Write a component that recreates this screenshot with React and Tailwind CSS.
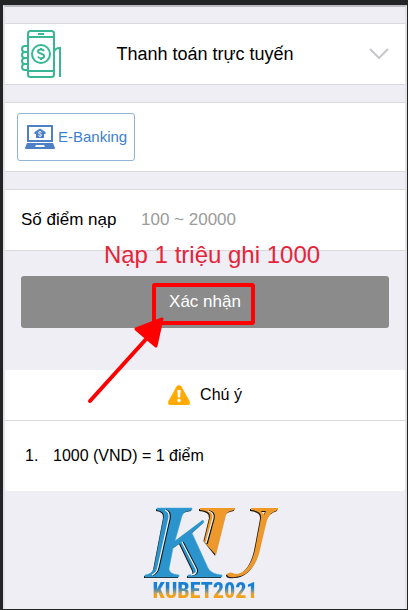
import React from "react";

function PhoneIcon() {
  return (
    <svg className="h-12 w-10 shrink-0" viewBox="0 0 40 48" fill="none" stroke="#38b795" strokeWidth="2" aria-hidden="true">
      <rect x="7" y="1" width="26" height="46" rx="2.5" />
      <path d="M7 7h26M7 41h26" />
      <path d="M17 4h6" />
      <circle cx="20" cy="24" r="9" />
      <path d="M23 21c-1-2-6-2-6 .5s6 1.5 6 4.500s-5 3-6 0.500M20 18v2M20 28v2" />
      <path d="M7 16H4q-3 0-3 3t3 3h3M4 22q-3 0-3 3t3 3h3M4 28q-3 0-3 3t3 3h3M4 34q-3 0-3 3t3 3h3" />
      <path d="M33 22q1-4 6-4v29" />
    </svg>
  );
}

function LaptopIcon() {
  return (
    <svg className="h-6 w-[30px] shrink-0" viewBox="0 0 30 24" aria-hidden="true">
      <path fill="#4e80c6" fillRule="evenodd" d="M3 0h24q1 0 1 1v16H2V1q0-1 1-1zM4 2v13h22V2z" />
      <path fill="#4e80c6" d="M15 3.500 20.500 7v2H19v4h-8V9H9.500V7z" />
      <path fill="none" stroke="#fff" strokeWidth="1" d="M16.500 7.500c-.5-1-3-1-3 .3s3 1 3 2.300-2.500 1.400-3 .3M15 6v1M15 11v1" />
      <path fill="#4e80c6" d="M2 18h26l2 5q0 1-1 1H1q-1 0-1-1z" />
      <path fill="#fff" d="M11 20h8l1 2H10z" />
    </svg>
  );
}

function KuLogo() {
  return (
    <svg className="h-[72px] w-[136px]" viewBox="0 0 136 72" role="img" aria-label="KU">
      <defs>
        <g id="ku-blue">
          <path d="M13 1H48V3L43 4Q39 5 38 9L31 34L59 13L60 15L48 26L64 61Q67 67 78 68V70H44V68Q51 68 49 63L36 36L29 41L25 62Q25 67 35 68V70H1V68Q8 67 10 62L20 10Q21 4 13 3Z" />
        </g>
        <g id="ku-orange">
          <path d="M56 1H91V3Q83 4 82 8L72 48L60 35L66 10Q67 4 56 3Z" />
          <path fillRule="evenodd" d="M107 1H134V3Q126 5 123 13L115 47Q108 69 91 70Q83 71 83 67Q86 64 91 67Q105 67 111 43L117 11Q118 4 107 3ZM117 4L120 8L122 4Z" />
        </g>
        <linearGradient id="ku-amber" x1="0" y1="0" x2="1" y2="1">
          <stop offset="0" stopColor="#f39a24" />
          <stop offset="1" stopColor="#e79735" />
        </linearGradient>
      </defs>
      <use href="#ku-blue" x="-1" y="1" fill="#10171c" />
      <use href="#ku-blue" fill="#2c94cc" stroke="#38a8da" strokeWidth="0.500" />
      <use href="#ku-orange" x="-1" y="1" fill="#19150f" />
      <use href="#ku-orange" fill="url(#ku-amber)" />
      <g fill="none" strokeLinejoin="round">
        <path stroke="#10171c" strokeWidth="1.500" d="M22 3Q27 5 26 11L15 60Q14 66 9 68M39 35L53 62Q55 67 48 68M65 4Q71 5 70 11L63 37" />
        <path stroke="#f4f5f8" strokeWidth="1.200" d="M21 3Q26 5 25 11L14 60Q13 66 8 68M38 35L52 62Q54 67 47 68M64 4Q70 5 69 11L62 36" />
        <path stroke="#efeef4" strokeWidth="2" d="M58 34 70 49" />
      </g>
    </svg>
  );
}

export default function App() {
  return (
    <div className="mr-0.5 flex min-h-screen flex-col border-t-[5px] border-r border-b border-l-[3px] border-[#232426] bg-[#efeef4] font-['Liberation_Sans',Arial,sans-serif] text-base text-black">
      <div className="flex grow flex-col border-x-2 border-t-2 border-x-[#e2e2e4] border-t-[#bdbdc1]">
        <main>
          <button type="button" className="mt-4 flex h-[62px] w-full items-center border-y border-[#d9d9dc] bg-white px-4 text-left">
            <PhoneIcon />
            <span className="grow text-center text-lg">Thanh toán trực tuyến</span>
            <span className="flex w-10 justify-end">
              <svg className="h-3 w-5 shrink-0" viewBox="0 0 20 12" fill="none" stroke="#c7c7cc" strokeWidth="2" aria-hidden="true">
                <path d="m1 1 9 9 9-9" />
              </svg>
            </span>
          </button>

          <section className="mt-[17px] border-y border-[#d9d9dc] bg-white px-3 py-2.5">
            <button type="button" className="flex h-12 w-[118px] items-center gap-[3px] rounded-[3px] border border-[#91b4d5] pl-[7px] whitespace-nowrap text-[#3c7fce]">
              <LaptopIcon />
              <span className="text-[15px]">E-Banking</span>
            </button>
          </section>

          <section className="mt-[17px] flex h-[62px] items-center border-y border-[#d9d9dc] bg-white px-4">
            <label htmlFor="points" className="w-[120px] shrink-0 text-[17px]">Số điểm nạp</label>
            <input id="points" type="text" inputMode="numeric" placeholder="100 ~ 20000" className="min-w-0 grow text-[17px] outline-none placeholder:text-[#9b9b9b]" />
          </section>

          <div className="relative px-4 pt-[25px] pb-[42px]">
            <p className="absolute inset-x-0 -top-3 pl-3.5 text-center text-2xl leading-8 text-[#e5243b]">Nạp 1 triệu ghi 1000</p>
            <button type="button" className="relative block h-[52px] w-full rounded-[3px] bg-[#8b8b8b] text-[17px] text-white">
              Xác nhận
              <span className="absolute top-[7px] left-1/2 h-[42px] w-[103px] -translate-x-[53px] rounded-[3px] border-4 border-[#ff0000]" />
            </button>
            <svg className="pointer-events-none absolute top-[66px] left-1/2 h-[90px] w-[78px] -translate-x-[119px]" viewBox="0 0 78 90" aria-hidden="true">
              <path d="M4 84 62 20" stroke="#ff0000" strokeWidth="4" strokeLinecap="round" />
              <path d="m76 2-6 27-20-17z" fill="#ff0000" stroke="#ff0000" strokeWidth="3" strokeLinejoin="round" />
            </svg>
          </div>

          <section className="rounded-b-[3px] bg-white">
            <h2 className="flex h-[51px] items-center justify-center gap-2.5 border-b border-[#d9d9dc]">
              <svg className="h-5 w-[22px]" viewBox="0 0 22 20" aria-hidden="true">
                <path fill="#ffaa05" d="M8.500 1.500Q11-1.500 13.500 1.500L21.500 16Q23 20 19 20H3Q-1 20 .5 16z" />
                <path fill="#fff" d="M9.300 5h3.400l-.6 7.500H9.900z" />
                <circle cx="11" cy="15.500" r="1.700" fill="#fff" />
              </svg>
              Chú ý
            </h2>
            <ol className="px-5 py-[23px]">
              <li className="flex leading-6">
                <span className="w-7">1.</span>
                <span>1000 (VND) = 1 điểm</span>
              </li>
            </ol>
          </section>
        </main>

        <footer className="flex flex-col items-center pt-4">
          <div className="pl-3.5">
            <KuLogo />
          </div>
          <p className="bg-linear-to-b from-[#177fd5] from-35% via-[#6f9590] via-50% to-[#f0a21c] to-65% bg-clip-text font-['Roboto_Condensed',Roboto,sans-serif] text-[22px] leading-6 font-extrabold text-transparent">KUBET2021</p>
        </footer>
      </div>
    </div>
  );
}
